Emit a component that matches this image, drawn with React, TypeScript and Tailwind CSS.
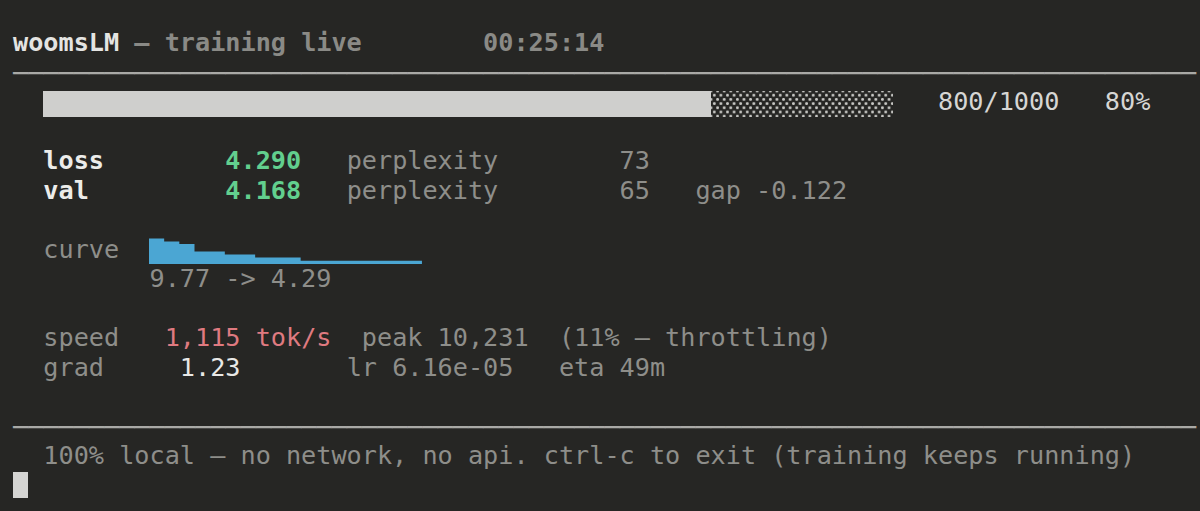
const GRAY = "text-[#8e8e8a]";

// sparkline steps: [width in cols, height px]
const curve: [number, number][] = [
	[1, 26],
	[1, 23],
	[1, 20.5],
	[2, 13],
	[2, 10],
	[3, 7],
	[8, 3.8],
];

function Sparkline() {
	let x = 0;
	let d = "M0 29.5";
	for (const [w, h] of curve) {
		d += ` L${x} ${29.5 - h} L${x + w} ${29.5 - h}`;
		x += w;
	}
	d += ` L${x} 29.5 Z`;
	return (
		<svg className="inline-block w-[18ch] h-[29.5px] align-top" viewBox="0 0 18 29.5" preserveAspectRatio="none">
			<path d={d} fill="#4ba6d3" />
		</svg>
	);
}

function Rule() {
	return <div className="text-[#a9a9a6] translate-y-[1px]">{"─".repeat(78)}</div>;
}

export default function App() {
	return (
		<div className="min-h-[511px] w-[1200px] overflow-hidden bg-[#262624] pl-[13px] pt-[28px] font-['DejaVu_Sans_Mono',monospace] text-[25.2px] leading-[29.5px] whitespace-pre text-[#8e8e8a]">
			<div className="font-bold">
				<span className="text-[#e4e4e2]">woomsLM</span>
				<span className="text-[#8a8a86]">{" — training live        00:25:14"}</span>
			</div>
			<Rule />
			<div className="flex items-center h-[29.5px]">
				<span>{"  "}</span>
				<div className="flex translate-y-[2px]">
					<div className="w-[44ch] h-[26px] bg-[#cfcfcd]" />
					<div className="w-[12ch] h-[26px] bg-[radial-gradient(circle,#c6c6c3_1.1px,transparent_1.7px),radial-gradient(circle,#c6c6c3_1.1px,transparent_1.7px)] bg-[length:6.6px_8.4px] bg-[position:0_0,3.3px_4.2px]" />
				</div>
				<span className="text-[#d6d6d4]">{"   800/1000   80%"}</span>
			</div>
			<div>{" "}</div>
			<div>
				<span className="font-bold text-[#ececea]">{"  loss"}</span>
				<span className="font-bold text-[#62cf8e]">{"        4.290"}</span>
				<span className={GRAY}>{"   perplexity        73"}</span>
			</div>
			<div>
				<span className="font-bold text-[#ececea]">{"  val"}</span>
				<span className="font-bold text-[#62cf8e]">{"         4.168"}</span>
				<span className={GRAY}>{"   perplexity        65   gap -0.122"}</span>
			</div>
			<div>{" "}</div>
			<div className="flex">
				<span>{"  curve  "}</span>
				<Sparkline />
			</div>
			<div>{"         9.77 -> 4.29"}</div>
			<div>{" "}</div>
			<div>
				<span>{"  speed   "}</span>
				<span className="text-[#df7a80]">1,115 tok/s</span>
				<span>{"  peak 10,231  (11% — throttling)"}</span>
			</div>
			<div>
				<span>{"  grad     "}</span>
				<span className="text-[#e8e8e6]">1.23</span>
				<span>{"       lr 6.16e-05   eta 49m"}</span>
			</div>
			<div>{" "}</div>
			<Rule />
			<div>{"  100% local — no network, no api. ctrl-c to exit (training keeps running)"}</div>
			<div className="flex items-center h-[29.5px]">
				<div className="w-[1ch] h-[26px] bg-[#d4d4d2]" />
			</div>
		</div>
	);
}
